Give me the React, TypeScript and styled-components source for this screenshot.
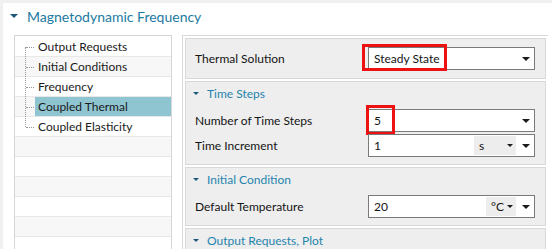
import { FC } from "react"
import styled, { createGlobalStyle } from "styled-components"

const FONT = `"Segoe UI", Lato, "Noto Sans", sans-serif`

const GlobalStyle = createGlobalStyle`
  body {
    margin: 0;
    background: #f0f0f0;
    font-family: ${FONT};
    color: #1a1a1a;
  }
`

const Page = styled.div`
  width: 552px;
  height: 249px;
  padding: 3px 0 0 3px;
  box-sizing: border-box;
  overflow: hidden;
`

const Panel = styled.div`
  background: #ffffff;
  height: 100%;
  display: flex;
  flex-direction: column;
`

const Header = styled.div`
  height: 26px;
  display: flex;
  align-items: center;
  padding-left: 7px;
  gap: 9px;
  font-size: 14px;
  color: #1d7aa2;
`

const Caret = styled.span<{ $size?: number }>`
  width: 0;
  height: 0;
  border-left: ${p => p.$size ?? 4}px solid transparent;
  border-right: ${p => p.$size ?? 4}px solid transparent;
  border-top: ${p => p.$size ?? 4}px solid #1d5878;
`

const Body = styled.div`
  flex: 1;
  display: flex;
  gap: 10px;
  padding: 6px 4px 0 11px;
  min-height: 0;
`

const Tree = styled.div`
  width: 158px;
  box-sizing: border-box;
  border: 1px solid #d6d6d6;
  border-bottom: none;
  padding-top: 1px;
  overflow: hidden;
`

const TreeRow = styled.div<{ $shaded: boolean }>`
  height: 19px;
  border-bottom: 1px solid #e8e8e8;
  background: ${p => (p.$shaded ? "#f7f7f7" : "#ffffff")};
  display: flex;
  font-size: 12px;
`

const Connector = styled.div<{ $first?: boolean; $last?: boolean; $show: boolean }>`
  width: 20px;
  flex: none;
  position: relative;

  &::before {
    content: "";
    display: ${p => (p.$show ? "block" : "none")};
    position: absolute;
    left: 10px;
    top: ${p => (p.$first ? "10px" : "-1px")};
    bottom: ${p => (p.$last ? "9px" : "-1px")};
    border-left: 1px dotted #999999;
  }

  &::after {
    content: "";
    display: ${p => (p.$show ? "block" : "none")};
    position: absolute;
    left: 11px;
    width: 8px;
    top: 10px;
    border-top: 1px dotted #999999;
  }
`

const TreeLabel = styled.div<{ $selected?: boolean }>`
  flex: 1;
  display: flex;
  align-items: center;
  padding-left: 3px;
  background: ${p => (p.$selected ? "#8fc4d1" : "transparent")};
  white-space: nowrap;
`

const Right = styled.div`
  flex: 1;
  border-left: 1px solid #d9d9d9;
  border-top: 1px solid #d9d9d9;
  padding: 2px 2px 0 2px;
  display: flex;
  flex-direction: column;
  gap: 2px;
  overflow: hidden;
`

const Section = styled.div<{ $plain?: boolean }>`
  background: #eeeeee;
  border: 1px solid #d8d8d8;
  padding: ${p => (p.$plain ? "8px 9px 8px 9px" : "0 9px 7px 9px")};
  display: flex;
  flex-direction: column;
  gap: 2px;
  flex: none;
`

const SectionTitle = styled.div`
  height: 22px;
  display: flex;
  align-items: center;
  gap: 8px;
  margin: 0 0 3px -2px;
  font-size: 12px;
  color: #1f84ad;
`

const Row = styled.div`
  display: grid;
  grid-template-columns: 173px 167px;
  align-items: center;
  font-size: 12px;
  color: #141414;
`

const Field = styled.div`
  position: relative;
  height: 23px;
  box-sizing: border-box;
  border: 1px solid #7a7a7a;
  background: #ffffff;
  display: flex;
  align-items: center;
  padding-left: 5px;
  font-size: 12px;
`

const FieldText = styled.span`
  flex: 1;
  white-space: nowrap;
`

const Unit = styled.div<{ $width: number }>`
  width: ${p => p.$width}px;
  height: 19px;
  box-sizing: border-box;
  background: #ededed;
  display: flex;
  align-items: center;
  justify-content: space-between;
  padding: 0 3px 0 5px;
  font-size: 12px;
`

const Arrow = styled.span<{ $small?: boolean }>`
  width: 0;
  height: 0;
  flex: none;
  margin: ${p => (p.$small ? "0" : "0 4px 0 6px")};
  border-left: ${p => (p.$small ? 3 : 4)}px solid transparent;
  border-right: ${p => (p.$small ? 3 : 4)}px solid transparent;
  border-top: ${p => (p.$small ? 3 : 4)}px solid #1a1a1a;
`

const Highlight = styled.div<{ $w: number; $h: number; $x: number; $y: number }>`
  position: absolute;
  left: ${p => p.$x}px;
  top: ${p => p.$y}px;
  width: ${p => p.$w}px;
  height: ${p => p.$h}px;
  box-sizing: border-box;
  border: 3px solid #ee1111;
  pointer-events: none;
`

type Item = { label: string, selected?: boolean }

const items: Item[] = [
  { label: "Output Requests" },
  { label: "Initial Conditions" },
  { label: "Frequency" },
  { label: "Coupled Thermal", selected: true },
  { label: "Coupled Elasticity" },
]

const TOTAL_ROWS = 12

const Dropdown: FC<{ value: string, unit?: string, unitWidth?: number, mark?: { x: number, y: number, w: number, h: number } }> = ({ value, unit, unitWidth, mark }) => (
  <Field>
    <FieldText>{value}</FieldText>
    {unit && (
      <Unit $width={unitWidth ?? 42}>
        <span>{unit}</span>
        <Arrow $small />
      </Unit>
    )}
    <Arrow />
    {mark && <Highlight $x={mark.x} $y={mark.y} $w={mark.w} $h={mark.h} />}
  </Field>
)

export default function App() {
  return (
    <Page>
      <GlobalStyle />
      <Panel>
        <Header>
          <Caret $size={4} />
          <span>Magnetodynamic Frequency</span>
        </Header>

        <Body>
          <Tree>
            {Array.from({ length: TOTAL_ROWS }).map((_, i) => {
              const item = items[i]
              return (
                <TreeRow key={i} $shaded={i % 2 === 1}>
                  <Connector $show={!!item} $first={i === 0} $last={i === items.length - 1} />
                  {item && <TreeLabel $selected={item.selected}>{item.label}</TreeLabel>}
                </TreeRow>
              )
            })}
          </Tree>

          <Right>
            <Section $plain>
              <Row>
                <span>Thermal Solution</span>
                <Dropdown value="Steady State" mark={{ x: -7, y: -4, w: 85, h: 27 }} />
              </Row>
            </Section>

            <Section>
              <SectionTitle><Caret $size={3.5} />Time Steps</SectionTitle>
              <Row>
                <span>Number of Time Steps</span>
                <Dropdown value="5" mark={{ x: -3, y: -5, w: 29, h: 30 }} />
              </Row>
              <Row>
                <span>Time Increment</span>
                <Dropdown value="1" unit="s" unitWidth={42} />
              </Row>
            </Section>

            <Section>
              <SectionTitle><Caret $size={3.5} />Initial Condition</SectionTitle>
              <Row>
                <span>Default Temperature</span>
                <Dropdown value="20" unit="°C" unitWidth={30} />
              </Row>
            </Section>

            <Section>
              <SectionTitle><Caret $size={3.5} />Output Requests, Plot</SectionTitle>
            </Section>
          </Right>
        </Body>
      </Panel>
    </Page>
  )
}
